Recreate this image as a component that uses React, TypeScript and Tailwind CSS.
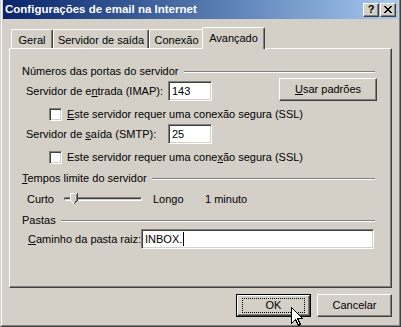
import React from "react";

const sunken =
  "border-t border-l border-t-[#808080] border-l-[#808080] border-b border-r border-b-white border-r-white shadow-[inset_1px_1px_0_#404040,inset_-1px_-1px_0_#d4d0c8]";
const raised =
  "border-t border-l border-t-white border-l-white border-b border-r border-b-[#404040] border-r-[#404040] shadow-[inset_-1px_-1px_0_#808080]";

function GroupHeader({ children }: { children: React.ReactNode }) {
  return (
    <div className="ml-[12px] mr-[16px] flex h-[13px] items-center">
      <span className="whitespace-nowrap leading-[13px]">{children}</span>
      <div className="ml-[5px] h-[2px] flex-1 border-t border-b border-t-[#808080] border-b-white" />
    </div>
  );
}

function Checkbox() {
  return <div className={`h-[13px] w-[13px] shrink-0 bg-white ${sunken}`} />;
}

function TextBox({ value, className = "", caret = false }: { value: string; className?: string; caret?: boolean }) {
  return (
    <div className={`flex h-[20px] shrink-0 items-center bg-white pl-[3px] ${sunken} ${className}`}>
      <span className="leading-[13px]">{value}</span>
      {caret && <span className="ml-px h-[14px] w-px bg-black" />}
    </div>
  );
}

function Tab({ label, width, active = false }: { label: string; width: string; active?: boolean }) {
  if (active) {
    return (
      <div
        className={`relative z-10 -ml-[2px] flex h-[22px] shrink-0 items-center justify-center rounded-tl-[2px] rounded-tr-[2px] border-t border-l border-t-white border-l-white border-r border-r-[#404040] bg-[#d4d0c8] pb-[1px] whitespace-nowrap shadow-[inset_-1px_0_0_#808080] ${width}`}
      >
        {label}
      </div>
    );
  }
  return (
    <div
      className={`mb-[1px] flex h-[19px] shrink-0 items-center justify-center rounded-tl-[2px] rounded-tr-[2px] border-t border-l border-t-white border-l-white border-r border-r-[#404040] pt-[2px] whitespace-nowrap shadow-[inset_-1px_0_0_#808080] ${width}`}
    >
      {label}
    </div>
  );
}

function CaptionButton({ children, className = "" }: { children: React.ReactNode; className?: string }) {
  return (
    <div className={`flex h-[14px] w-[16px] items-center justify-center bg-[#d4d0c8] ${raised} ${className}`}>
      {children}
    </div>
  );
}

export default function App() {
  return (
    <div className="relative h-[327px] w-[401px] border-l border-r border-b border-l-[#d4d0c8] border-r-[#404040] border-b-[#404040] bg-[#d4d0c8] font-['Liberation_Sans',Arial,sans-serif] text-[11px] leading-[13px] text-black select-none">
      <div className="flex h-full flex-col border-l border-r border-b border-l-white border-r-[#808080] border-b-[#808080] px-px">
        {/* title bar */}
        <div className="flex h-[19px] shrink-0 items-center bg-linear-to-r from-[#0a246a] to-[#a6caf0] pl-[2px] pr-[2px]">
          <span className="flex-1 text-[11.5px] font-bold text-white">Configurações de email na Internet</span>
          <CaptionButton>
            <span className="text-[11px] font-bold leading-none">?</span>
          </CaptionButton>
          <CaptionButton className="ml-px">
            <svg width="8" height="7" viewBox="0 0 8 7" shapeRendering="crispEdges">
              <path d="M0 0h2v1H0zM6 0h2v1H6zM1 1h2v1H1zM5 1h2v1H5zM2 2h4v1H2zM3 3h2v1H3zM2 4h4v1H2zM1 5h2v1H1zM5 5h2v1H5zM0 6h2v1H0zM6 6h2v1H6z" fill="#000" />
            </svg>
          </CaptionButton>
        </div>

        <div className="ml-[6px] mt-[8px] flex flex-col">
          {/* tabs */}
          <div className="flex h-[22px] items-end pl-[2px]">
            <Tab label="Geral" width="w-[42px]" />
            <Tab label="Servidor de saída" width="w-[96px]" />
            <Tab label="Conexão" width="w-[55px]" />
            <Tab label="Avançado" width="w-[63px]" active />
          </div>

          {/* panel */}
          <div className="-mt-px flex h-[240px] w-[383px] flex-col border-t border-l border-t-white border-l-white border-r border-b border-r-[#404040] border-b-[#404040] shadow-[inset_-1px_-1px_0_#808080]">
            <div className="mt-[16px]">
              <GroupHeader>Números das portas do servidor</GroupHeader>
            </div>

            <div className="ml-[16px] flex h-[23px] items-end">
              <span className="flex h-[20px] w-[142px] shrink-0 items-center whitespace-nowrap">
                <span>
                  Servidor de e<u>n</u>trada (IMAP):
                </span>
              </span>
              <TextBox value="143" className="w-[44px]" />
              <div className={`ml-[67px] flex h-[23px] w-[98px] items-center justify-center ${raised}`}>
                <span>
                  <u>U</u>sar padrões
                </span>
              </div>
            </div>

            <div className="ml-[39px] mt-[7px] flex h-[13px] items-center whitespace-nowrap">
              <Checkbox />
              <span className="ml-[5px]">
                <u>E</u>ste servidor requer uma conexão segura (SSL)
              </span>
            </div>

            <div className="ml-[16px] mt-[3px] flex h-[20px] items-center">
              <span className="w-[142px] shrink-0 whitespace-nowrap">
                Servidor de <u>s</u>aída (SMTP):
              </span>
              <TextBox value="25" className="w-[44px]" />
            </div>

            <div className="ml-[39px] mt-[7px] flex h-[13px] items-center whitespace-nowrap">
              <Checkbox />
              <span className="ml-[5px]">
                Este servidor requer uma cone<u>x</u>ão segura (SSL)
              </span>
            </div>

            <div className="mt-[8px]">
              <GroupHeader>
                <u>T</u>empos limite do servidor
              </GroupHeader>
            </div>

            <div className="ml-[17px] mt-[4px] flex h-[20px] items-center whitespace-nowrap">
              <span className="w-[35px] shrink-0">Curto</span>
              <div className="relative flex h-[20px] w-[82px] shrink-0 items-center">
                <div className="mx-[2px] h-[4px] flex-1 border-t border-l border-b border-r border-t-[#808080] border-l-[#808080] border-b-white border-r-white bg-[#404040] shadow-[inset_0_-1px_0_#d4d0c8]" />
                <svg className="absolute left-[8px] top-[4px]" width="8" height="12" viewBox="0 0 8 12" shapeRendering="crispEdges">
                  <polygon points="0,0 8,0 8,8 4,12 0,8" fill="#d4d0c8" />
                  <path d="M0 0h7v1H0zM0 1h1v7H0zM1 8h1v1H1zM2 9h1v1H2zM3 10h1v1H3z" fill="#fff" />
                  <path d="M7 0h1v8H7zM6 8h1v1H6zM5 9h1v1H5zM4 10h1v1H4zM5 8h1v1H5z" fill="#404040" />
                  <path d="M6 1h1v7H6z" fill="#808080" />
                </svg>
              </div>
              <span className="ml-[9px] w-[52px] shrink-0">Longo</span>
              <span>1 minuto</span>
            </div>

            <div className="mt-[5px]">
              <GroupHeader>Pastas</GroupHeader>
            </div>

            <div className="ml-[18px] mt-[2px] flex h-[20px] items-center">
              <span className="w-[113px] shrink-0 whitespace-nowrap">
                <u>C</u>aminho da pasta raiz:
              </span>
              <TextBox value="INBOX." className="w-[233px] pl-[2px]" caret />
            </div>
          </div>

          {/* buttons */}
          <div className="mt-[6px] flex w-[383px] justify-end gap-[6px]">
            <div className="h-[23px] w-[75px] border border-black">
              <div className={`flex h-full w-full items-center justify-center ${raised}`}>
                <span className="flex h-[15px] w-[63px] items-center justify-center border border-dotted border-black">
                  OK
                </span>
              </div>
            </div>
            <div className={`flex h-[23px] w-[75px] items-center justify-center ${raised}`}>Cancelar</div>
          </div>
        </div>
      </div>

      {/* mouse pointer */}
      <svg className="absolute left-[290px] top-[307px]" width="12" height="19" viewBox="0 0 12 19" shapeRendering="crispEdges">
        <path d="M0.5 0.5 L0.5 16.5 L4.5 12.5 L7.5 18.5 L9.5 17.5 L6.5 11.5 L11.5 11.5 Z" fill="#fff" stroke="#000" strokeWidth="1" />
      </svg>
    </div>
  );
}
